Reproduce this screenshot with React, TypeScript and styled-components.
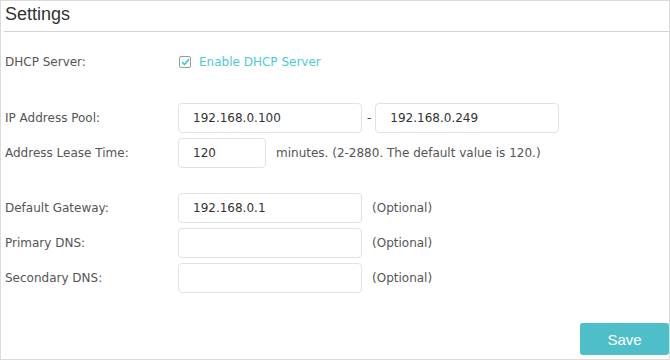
import React from "react";
import styled, { createGlobalStyle } from "styled-components";

const Global = createGlobalStyle`
  html, body { margin: 0; padding: 0; background: #fff; }
  body { font-family: "DejaVu Sans", Verdana, sans-serif; }
  * { box-sizing: border-box; }
`;

const Frame = styled.div`
  width: 670px;
  height: 360px;
  border: 1px solid #dcdcdc;
  display: flex;
  flex-direction: column;
  background: #fff;
`;

const Header = styled.div`
  height: 31px;
  margin-left: 3px;
  border-bottom: 1px solid #d4d4d4;
`;

const Title = styled.h2`
  margin: 0;
  padding-left: 1px;
  font-family: "Liberation Sans", Arial, sans-serif;
  font-size: 18px;
  font-weight: normal;
  line-height: 26px;
  color: #333;
`;

const Form = styled.div`
  display: flex;
  flex-direction: column;
  padding-left: 4px;
  margin-top: 15px;
`;

const Group = styled.div<{ $top?: number }>`
  display: flex;
  flex-direction: column;
  gap: 5px;
  margin-top: ${(p) => p.$top ?? 0}px;
`;

const Row = styled.div`
  display: flex;
  align-items: center;
  height: 30px;
  font-size: 12px;
  color: #555;
`;

const Label = styled.div`
  width: 173px;
  flex: none;
`;

const Input = styled.input<{ $w: number }>`
  width: ${(p) => p.$w}px;
  height: 30px;
  border: 1px solid #e2e2e2;
  border-radius: 4px;
  padding: 0 0 0 14px;
  font-family: "DejaVu Sans", Verdana, sans-serif;
  font-size: 12px;
  color: #333;
  background: #fff;
  outline: none;
`;

const Dash = styled.span`
  margin: 0 4px 0 5px;
  color: #444;
`;

const Note = styled.span`
  margin-left: 10px;
  color: #555;
`;

const CheckLabel = styled.label`
  display: flex;
  align-items: center;
  gap: 8px;
  margin-left: 1px;
  color: #4acbd6;
  cursor: pointer;
`;

const Box = styled.span`
  width: 12px;
  height: 12px;
  border: 1px solid #9a9a9a;
  border-radius: 2px;
  display: flex;
  align-items: center;
  justify-content: center;
`;

const Footer = styled.div`
  margin-top: auto;
  display: flex;
  justify-content: flex-end;
  padding-bottom: 4px;
`;

const SaveButton = styled.button`
  width: 89px;
  height: 32px;
  border: none;
  border-radius: 3px;
  background: #4ebfc9;
  color: #fff;
  font-family: "Liberation Sans", Arial, sans-serif;
  font-size: 15px;
  cursor: pointer;
`;

export default function App() {
  return (
    <>
      <Global />
      <Frame>
        <Header>
          <Title>Settings</Title>
        </Header>
        <Form>
          <Group>
            <Row>
              <Label>DHCP Server:</Label>
              <CheckLabel>
                <Box>
                  <svg width="9" height="8" viewBox="0 0 9 8">
                    <path d="M1 4.2 L3.5 6.5 L8 1.2" fill="none" stroke="#4acbd6" strokeWidth="1.8" />
                  </svg>
                </Box>
                Enable DHCP Server
              </CheckLabel>
            </Row>
          </Group>
          <Group $top={26}>
            <Row>
              <Label>IP Address Pool:</Label>
              <Input $w={184} defaultValue="192.168.0.100" />
              <Dash>-</Dash>
              <Input $w={184} defaultValue="192.168.0.249" />
            </Row>
            <Row>
              <Label>Address Lease Time:</Label>
              <Input $w={88} defaultValue="120" />
              <Note>minutes. (2-2880. The default value is 120.)</Note>
            </Row>
          </Group>
          <Group $top={25}>
            <Row>
              <Label>Default Gateway:</Label>
              <Input $w={184} defaultValue="192.168.0.1" />
              <Note>(Optional)</Note>
            </Row>
            <Row>
              <Label>Primary DNS:</Label>
              <Input $w={184} defaultValue="" />
              <Note>(Optional)</Note>
            </Row>
            <Row>
              <Label>Secondary DNS:</Label>
              <Input $w={184} defaultValue="" />
              <Note>(Optional)</Note>
            </Row>
          </Group>
        </Form>
        <Footer>
          <SaveButton>Save</SaveButton>
        </Footer>
      </Frame>
    </>
  );
}
